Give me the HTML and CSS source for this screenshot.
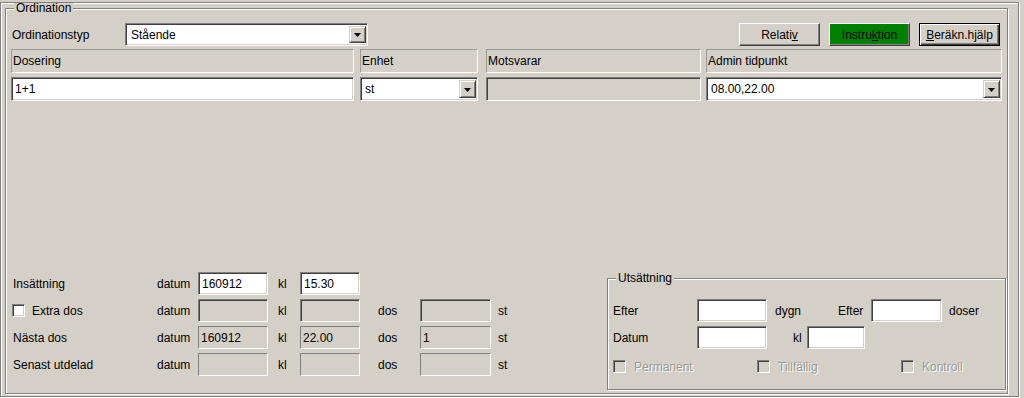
FILE: index.html
```html
<!DOCTYPE html>
<html lang="sv">
<head>
<meta charset="utf-8">
<title>Ordination</title>
<link rel="stylesheet" href="styles.css">
</head>
<body>
<div class="window">
  <fieldset class="group main">
    <legend>Ordination</legend>
    <div class="toprow">
      <span class="typ-label">Ordinationstyp</span>
      <div class="combo typ-combo"><span class="val">Stående</span><span class="ddbtn"><svg width="7" height="4" viewBox="0 0 7 4"><polygon points="0,0 7,0 3.5,4" fill="#000"/></svg></span></div>
      <div class="buttons">
        <button class="btn">Relati<u>v</u></button>
        <button class="btn green">Instru<u>k</u>tion</button>
        <button class="btn default"><u>B</u>eräkn.hjälp</button>
      </div>
    </div>
    <div class="cols heads">
      <div class="head c1">Dosering</div>
      <div class="head c2">Enhet</div>
      <div class="head c3">Motsvarar</div>
      <div class="head c4">Admin tidpunkt</div>
    </div>
    <div class="cols inputs">
      <div class="edit c1">1+1</div>
      <div class="combo c2"><span class="val">st</span><span class="ddbtn"><svg width="7" height="4" viewBox="0 0 7 4"><polygon points="0,0 7,0 3.5,4" fill="#000"/></svg></span></div>
      <div class="edit off c3"></div>
      <div class="combo c4"><span class="val">08.00,22.00</span><span class="ddbtn"><svg width="7" height="4" viewBox="0 0 7 4"><polygon points="0,0 7,0 3.5,4" fill="#000"/></svg></span></div>
    </div>
    <div class="lower">
      <div class="times">
        <span class="rl">Insättning</span>
        <span class="dl">datum</span>
        <div class="edit">160912</div>
        <span class="kl">kl</span>
        <div class="edit">15.30</div>
        <span></span><span></span><span></span>

        <span class="rl chk"><span class="cbox"></span><span class="cl">Extra dos</span></span>
        <span class="dl">datum</span>
        <div class="edit off"></div>
        <span class="kl">kl</span>
        <div class="edit off"></div>
        <span class="dos">dos</span>
        <div class="edit off"></div>
        <span class="st">st</span>

        <span class="rl">Nästa dos</span>
        <span class="dl">datum</span>
        <div class="stat">160912</div>
        <span class="kl">kl</span>
        <div class="stat">22.00</div>
        <span class="dos">dos</span>
        <div class="stat">1</div>
        <span class="st">st</span>

        <span class="rl">Senast utdelad</span>
        <span class="dl">datum</span>
        <div class="stat"></div>
        <span class="kl">kl</span>
        <div class="stat"></div>
        <span class="dos">dos</span>
        <div class="stat"></div>
        <span class="st">st</span>
      </div>
      <fieldset class="group uts">
        <legend>Utsättning</legend>
        <div class="urow">
          <span class="ulabel">Efter</span>
          <div class="edit w70"></div>
          <span class="dygn">dygn</span>
          <span class="efter2">Efter</span>
          <div class="edit w71"></div>
          <span class="doser">doser</span>
        </div>
        <div class="urow">
          <span class="ulabel">Datum</span>
          <div class="edit w70"></div>
          <span class="ukl">kl</span>
          <div class="edit w58"></div>
        </div>
        <div class="urow checks">
          <span class="citem"><span class="cbox dis"></span><span class="cl dis-text">Permanent</span></span>
          <span class="citem"><span class="cbox dis"></span><span class="cl dis-text">Tillfällig</span></span>
          <span class="citem last"><span class="cbox dis"></span><span class="cl dis-text">Kontroll</span></span>
        </div>
      </fieldset>
    </div>
  </fieldset>
</div>
</body>
</html>
```

FILE: styles.css
```css
* { box-sizing: border-box; }
html, body { margin: 0; padding: 0; }
body {
  background: #d4d0c8;
  font-family: "Liberation Sans", Arial, sans-serif;
  font-size: 12px;
  color: #000;
  width: 1024px;
  height: 398px;
  overflow: hidden;
}

.window {
  margin: 2px 5px 0 0;
  height: 395px;
  border: 1px solid #808080;
  box-shadow: inset 1px 1px 0 #fff, 1px 1px 0 #fff;
  padding: 0 10px 0 4px;
}

.group {
  margin: 0;
  border: 1px solid #808080;
  box-shadow: inset 1px 1px 0 #fff, 1px 1px 0 #fff;
  min-width: 0;
}
.group > legend {
  line-height: 10px;
  padding: 0 2px;
  margin-left: 3px;
  background: #d4d0c8;
}

.main {
  height: 391px;
  padding: 10px 2px 0 5px;
}

/* top row */
.toprow {
  display: flex;
  align-items: center;
  height: 23px;
}
.typ-label { width: 114px; padding-left: 1px; flex: none; }
.typ-combo { width: 243px; height: 24px; flex: none; }
.buttons {
  margin-left: auto;
  margin-right: 5px;
  display: flex;
  gap: 9px;
}

.btn {
  font: inherit;
  width: 81px;
  height: 23px;
  padding: 0;
  background: #d4d0c8;
  color: #000;
  border: 1px solid;
  border-color: #fff #404040 #404040 #fff;
  box-shadow: inset -1px -1px 0 #808080;
}
.btn.green { background: #008000; }
.btn.default {
  border: 1px solid #000;
  box-shadow: inset 1px 1px 0 #fff, inset -1px -1px 0 #404040, inset -2px -2px 0 #808080;
}

/* columns */
.cols { display: flex; }
.cols > * { flex: none; }
.heads { margin-top: 3px; height: 24px; }
.inputs { margin-top: 4px; height: 24px; }
.c1 { width: 343px; }
.c2 { width: 118px; margin-left: 6px; }
.c3 { width: 215px; margin-left: 8px; }
.c4 { width: 296px; margin-left: 5px; }

.head {
  height: 24px;
  border: 1px solid;
  border-color: #9c9a94 #fff #fff #9c9a94;
  padding: 4px 0 0 1px;
  line-height: 14px;
}

/* edit & combo */
.edit, .combo {
  height: 23px;
  background: #fff;
  border: 1px solid;
  border-color: #808080 #fff #fff #808080;
  box-shadow: inset 1px 1px 0 #404040, inset -1px -1px 0 #d4d0c8;
  line-height: 14px;
  padding: 4px 2px 0 3px;
  white-space: nowrap;
  overflow: hidden;
  flex: none;
}
.inputs .edit, .inputs .combo { height: 24px; }
.edit.off { background: #d4d0c8; }

.combo {
  display: flex;
  padding: 2px 1px 2px 1px;
}
.combo .val {
  flex: 1;
  padding: 2px 0 0 3px;
}
.typ-combo .val { padding-left: 4px; }
.ddbtn {
  width: 17px;
  height: 100%;
  background: #d4d0c8;
  border: 1px solid;
  border-color: #d4d0c8 #404040 #404040 #d4d0c8;
  box-shadow: inset 1px 1px 0 #fff, inset -1px -1px 0 #808080;
  display: flex;
  align-items: center;
  justify-content: center;
  padding-top: 1px;
}
.ddbtn svg { display: block; }

.stat {
  height: 23px;
  border: 1px solid;
  border-color: #808080 #fff #fff #808080;
  line-height: 14px;
  padding: 4px 2px 0 2px;
}

/* lower section */
.lower {
  display: flex;
  align-items: flex-start;
  margin-top: 171px;
}
.lower > * { flex: none; }
.times {
  width: 596px;
  display: grid;
  grid-template-columns: 146px 41px 70px 32px 60px 60px 71px auto;
  grid-auto-rows: 23px;
  row-gap: 4px;
  align-items: center;
}
.times > .edit, .times > .stat { align-self: stretch; }
.rl { padding-left: 2px; }
.kl { padding-left: 10px; }
.dos { padding-left: 18px; }
.st { padding-left: 7px; }

.chk { display: flex; align-items: center; padding-left: 1px; }
.cbox {
  display: inline-block;
  width: 13px;
  height: 13px;
  background: #fff;
  border: 1px solid;
  border-color: #808080 #fff #fff #808080;
  box-shadow: inset 1px 1px 0 #404040, inset -1px -1px 0 #d4d0c8;
  flex: none;
}
.cbox.dis { background: #d4d0c8; }
.chk .cl { margin-left: 7px; }

.uts {
  width: 399px;
  height: 117px;
  margin-top: 1px;
  padding: 16px 4px 0 5px;
}
.urow {
  display: flex;
  align-items: center;
  height: 23px;
  margin-bottom: 4px;
}
.urow > * { flex: none; }
.ulabel { width: 84px; }
.w70 { width: 70px; }
.w71 { width: 71px; }
.w58 { width: 58px; }
.dygn { width: 71px; padding-left: 8px; }
.efter2 { width: 33px; }
.doser { padding-left: 7px; }
.ukl { margin-left: 26px; width: 14px; }

.checks { margin-top: 6px; }
.citem { display: flex; align-items: center; width: 144px; }
.citem.last { width: auto; }
.citem .cl { margin-left: 8px; }
.dis-text { color: #9a9891; text-shadow: 1px 1px 0 #fff; }
```
